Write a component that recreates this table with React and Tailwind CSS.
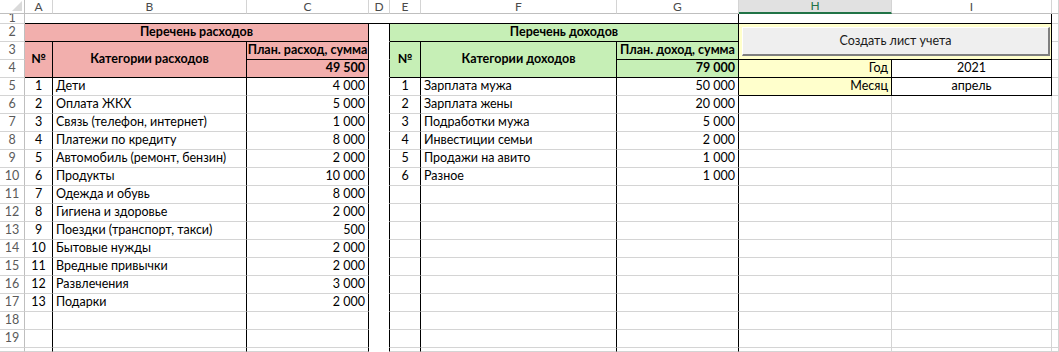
import React from 'react';

// Бюджет: перечень расходов / доходов, как лист Excel
const expenses = [
  ['Дети', '4 000'],
  ['Оплата ЖКХ', '5 000'],
  ['Связь (телефон, интернет)', '1 000'],
  ['Платежи по кредиту', '8 000'],
  ['Автомобиль (ремонт, бензин)', '2 000'],
  ['Продукты', '10 000'],
  ['Одежда и обувь', '8 000'],
  ['Гигиена и здоровье', '2 000'],
  ['Поездки (транспорт, такси)', '500'],
  ['Бытовые нужды', '2 000'],
  ['Вредные привычки', '2 000'],
  ['Развлечения', '3 000'],
  ['Подарки', '2 000'],
];

const incomes = [
  ['Зарплата мужа', '50 000'],
  ['Зарплата жены', '20 000'],
  ['Подработки мужа', '5 000'],
  ['Инвестиции семьи', '2 000'],
  ['Продажи на авито', '1 000'],
  ['Разное', '1 000'],
];

const LETTERS = ['A', 'B', 'C', 'D', 'E', 'F', 'G', 'H', 'I', ''];

function Cell({
  span = '',
  bg = 'bg-white',
  r = 'border-r-[#d4d4d4]',
  b = 'border-b-[#d4d4d4]',
  align = 'justify-start pl-[3px]',
  bold = false,
  children,
}) {
  return (
    <div
      className={`${span} ${bg} ${r} ${b} ${align} ${bold ? 'font-bold' : ''} border-r border-b flex items-center overflow-hidden whitespace-nowrap text-[12.5px] text-black leading-none`}
    >
      {children}
    </div>
  );
}

function RowHead({ n }) {
  return (
    <div className="border-r border-b border-r-[#bfbfbf] border-b-[#d4d4d4] bg-white flex items-center justify-center overflow-hidden text-[12.5px] text-[#5a5a5a] leading-none">
      {n}
    </div>
  );
}

function DataRow({ i }) {
  const ex = expenses[i];
  const inc = incomes[i];
  const n = i + 5;
  return (
    <>
      <RowHead n={n} />
      <Cell r="border-r-black" align="justify-center">{ex ? i + 1 : ''}</Cell>
      <Cell r="border-r-black">{ex ? ex[0] : ''}</Cell>
      <Cell r="border-r-black" align="justify-end pr-[3px]">{ex ? ex[1] : ''}</Cell>
      <Cell r="border-r-black" b="border-b-white" />
      <Cell r="border-r-black" align="justify-center">{inc ? i + 1 : ''}</Cell>
      <Cell r="border-r-black">{inc ? inc[0] : ''}</Cell>
      <Cell r="border-r-black" align="justify-end pr-[3px]">{inc ? inc[1] : ''}</Cell>
      {n === 5 ? (
        <>
          <Cell bg="bg-[#ffffcc]" r="border-r-black" b="border-b-black" align="justify-end pr-[3px]">Месяц</Cell>
          <Cell r="border-r-black" b="border-b-black" align="justify-center">апрель</Cell>
        </>
      ) : (
        <>
          <Cell />
          <Cell />
        </>
      )}
      <Cell />
    </>
  );
}

export default function App() {
  return (
    <div className="relative w-[1059px] h-[352px] overflow-hidden bg-white font-[Lato,sans-serif]">
      <div className="grid grid-cols-[25px_28px_194px_122px_21px_31px_196px_122px_153px_160px_7px] grid-rows-[14px_10px_repeat(18,18px)_4px]">
        {/* column header */}
        <div className="relative border-r border-b border-r-[#bfbfbf] border-b-[#bfbfbf] bg-white">
          <svg className="absolute right-[2px] bottom-[2px]" width="10" height="10" viewBox="0 0 10 10">
            <polygon points="10,0 10,10 0,10" fill="#dadada" />
          </svg>
        </div>
        {LETTERS.map((l) =>
          l === 'H' ? (
            <div
              key={l}
              className="border-r border-b-2 border-r-[#d4d4d4] border-b-[#217346] bg-[#e1e1e1] flex items-center justify-center text-[12px] text-[#217346] leading-none"
            >
              {l}
            </div>
          ) : (
            <div
              key={l || 'J'}
              className="border-r border-b border-r-[#d4d4d4] border-b-[#bfbfbf] bg-white flex items-center justify-center text-[12px] text-[#4a4a4a] leading-none"
            >
              {l}
            </div>
          )
        )}

        {/* row 1 */}
        <RowHead n={1} />
        <Cell span="col-span-7" r="border-r-black" b="border-b-black" />
        <Cell span="col-span-2" r="border-r-black" b="border-b-black" />
        <Cell />

        {/* row 2 */}
        <RowHead n={2} />
        <Cell span="col-span-3" bg="bg-[#f2afad]" r="border-r-black" b="border-b-black" align="justify-center" bold>
          Перечень расходов
        </Cell>
        <Cell r="border-r-black" b="border-b-white" />
        <Cell span="col-span-3" bg="bg-[#c6efb6]" r="border-r-black" b="border-b-black" align="justify-center" bold>
          Перечень доходов
        </Cell>
        <Cell span="col-span-2 row-span-2" bg="bg-[#ffffcc]" r="border-r-black" b="border-b-black" />
        <Cell />

        {/* row 3 */}
        <RowHead n={3} />
        <Cell span="row-span-2" bg="bg-[#f2afad]" r="border-r-black" b="border-b-black" align="justify-center" bold>
          №
        </Cell>
        <Cell span="row-span-2" bg="bg-[#f2afad]" r="border-r-black" b="border-b-black" align="justify-center" bold>
          Категории расходов
        </Cell>
        <Cell bg="bg-[#f2afad]" r="border-r-black" b="border-b-black" align="justify-center" bold>
          План. расход, сумма
        </Cell>
        <Cell r="border-r-black" b="border-b-white" />
        <Cell span="row-span-2" bg="bg-[#c6efb6]" r="border-r-black" b="border-b-black" align="justify-center" bold>
          №
        </Cell>
        <Cell span="row-span-2" bg="bg-[#c6efb6]" r="border-r-black" b="border-b-black" align="justify-center" bold>
          Категории доходов
        </Cell>
        <Cell bg="bg-[#c6efb6]" r="border-r-black" b="border-b-black" align="justify-center" bold>
          План. доход, сумма
        </Cell>
        <Cell />

        {/* row 4 */}
        <RowHead n={4} />
        <Cell bg="bg-[#f2afad]" r="border-r-black" b="border-b-black" align="justify-end pr-[3px]" bold>
          49 500
        </Cell>
        <Cell r="border-r-black" b="border-b-white" />
        <Cell bg="bg-[#c6efb6]" r="border-r-black" b="border-b-black" align="justify-end pr-[3px]" bold>
          79 000
        </Cell>
        <Cell bg="bg-[#ffffcc]" r="border-r-black" b="border-b-black" align="justify-end pr-[3px]">Год</Cell>
        <Cell r="border-r-black" b="border-b-black" align="justify-center">2021</Cell>
        <Cell />

        {Array.from({ length: 15 }, (_, i) => (
          <DataRow key={i} i={i} />
        ))}

        {/* row 20, cut off */}
        <RowHead n="" />
        <Cell r="border-r-black" />
        <Cell r="border-r-black" />
        <Cell r="border-r-black" />
        <Cell r="border-r-black" b="border-b-white" />
        <Cell r="border-r-black" />
        <Cell r="border-r-black" />
        <Cell r="border-r-black" />
        <Cell />
        <Cell />
        <Cell />
      </div>

      {/* кнопка поверх ячеек H2:I3 */}
      <button className="absolute left-[742px] top-[27px] w-[308px] h-[29px] bg-[#efefef] border-t border-l border-t-white border-l-white border-r-2 border-b-2 border-r-[#7f7f7f] border-b-[#7f7f7f] flex items-center justify-center text-[12.5px] text-[#1a1a1a] font-[Lato,sans-serif]">
        Создать лист учета
      </button>
    </div>
  );
}
